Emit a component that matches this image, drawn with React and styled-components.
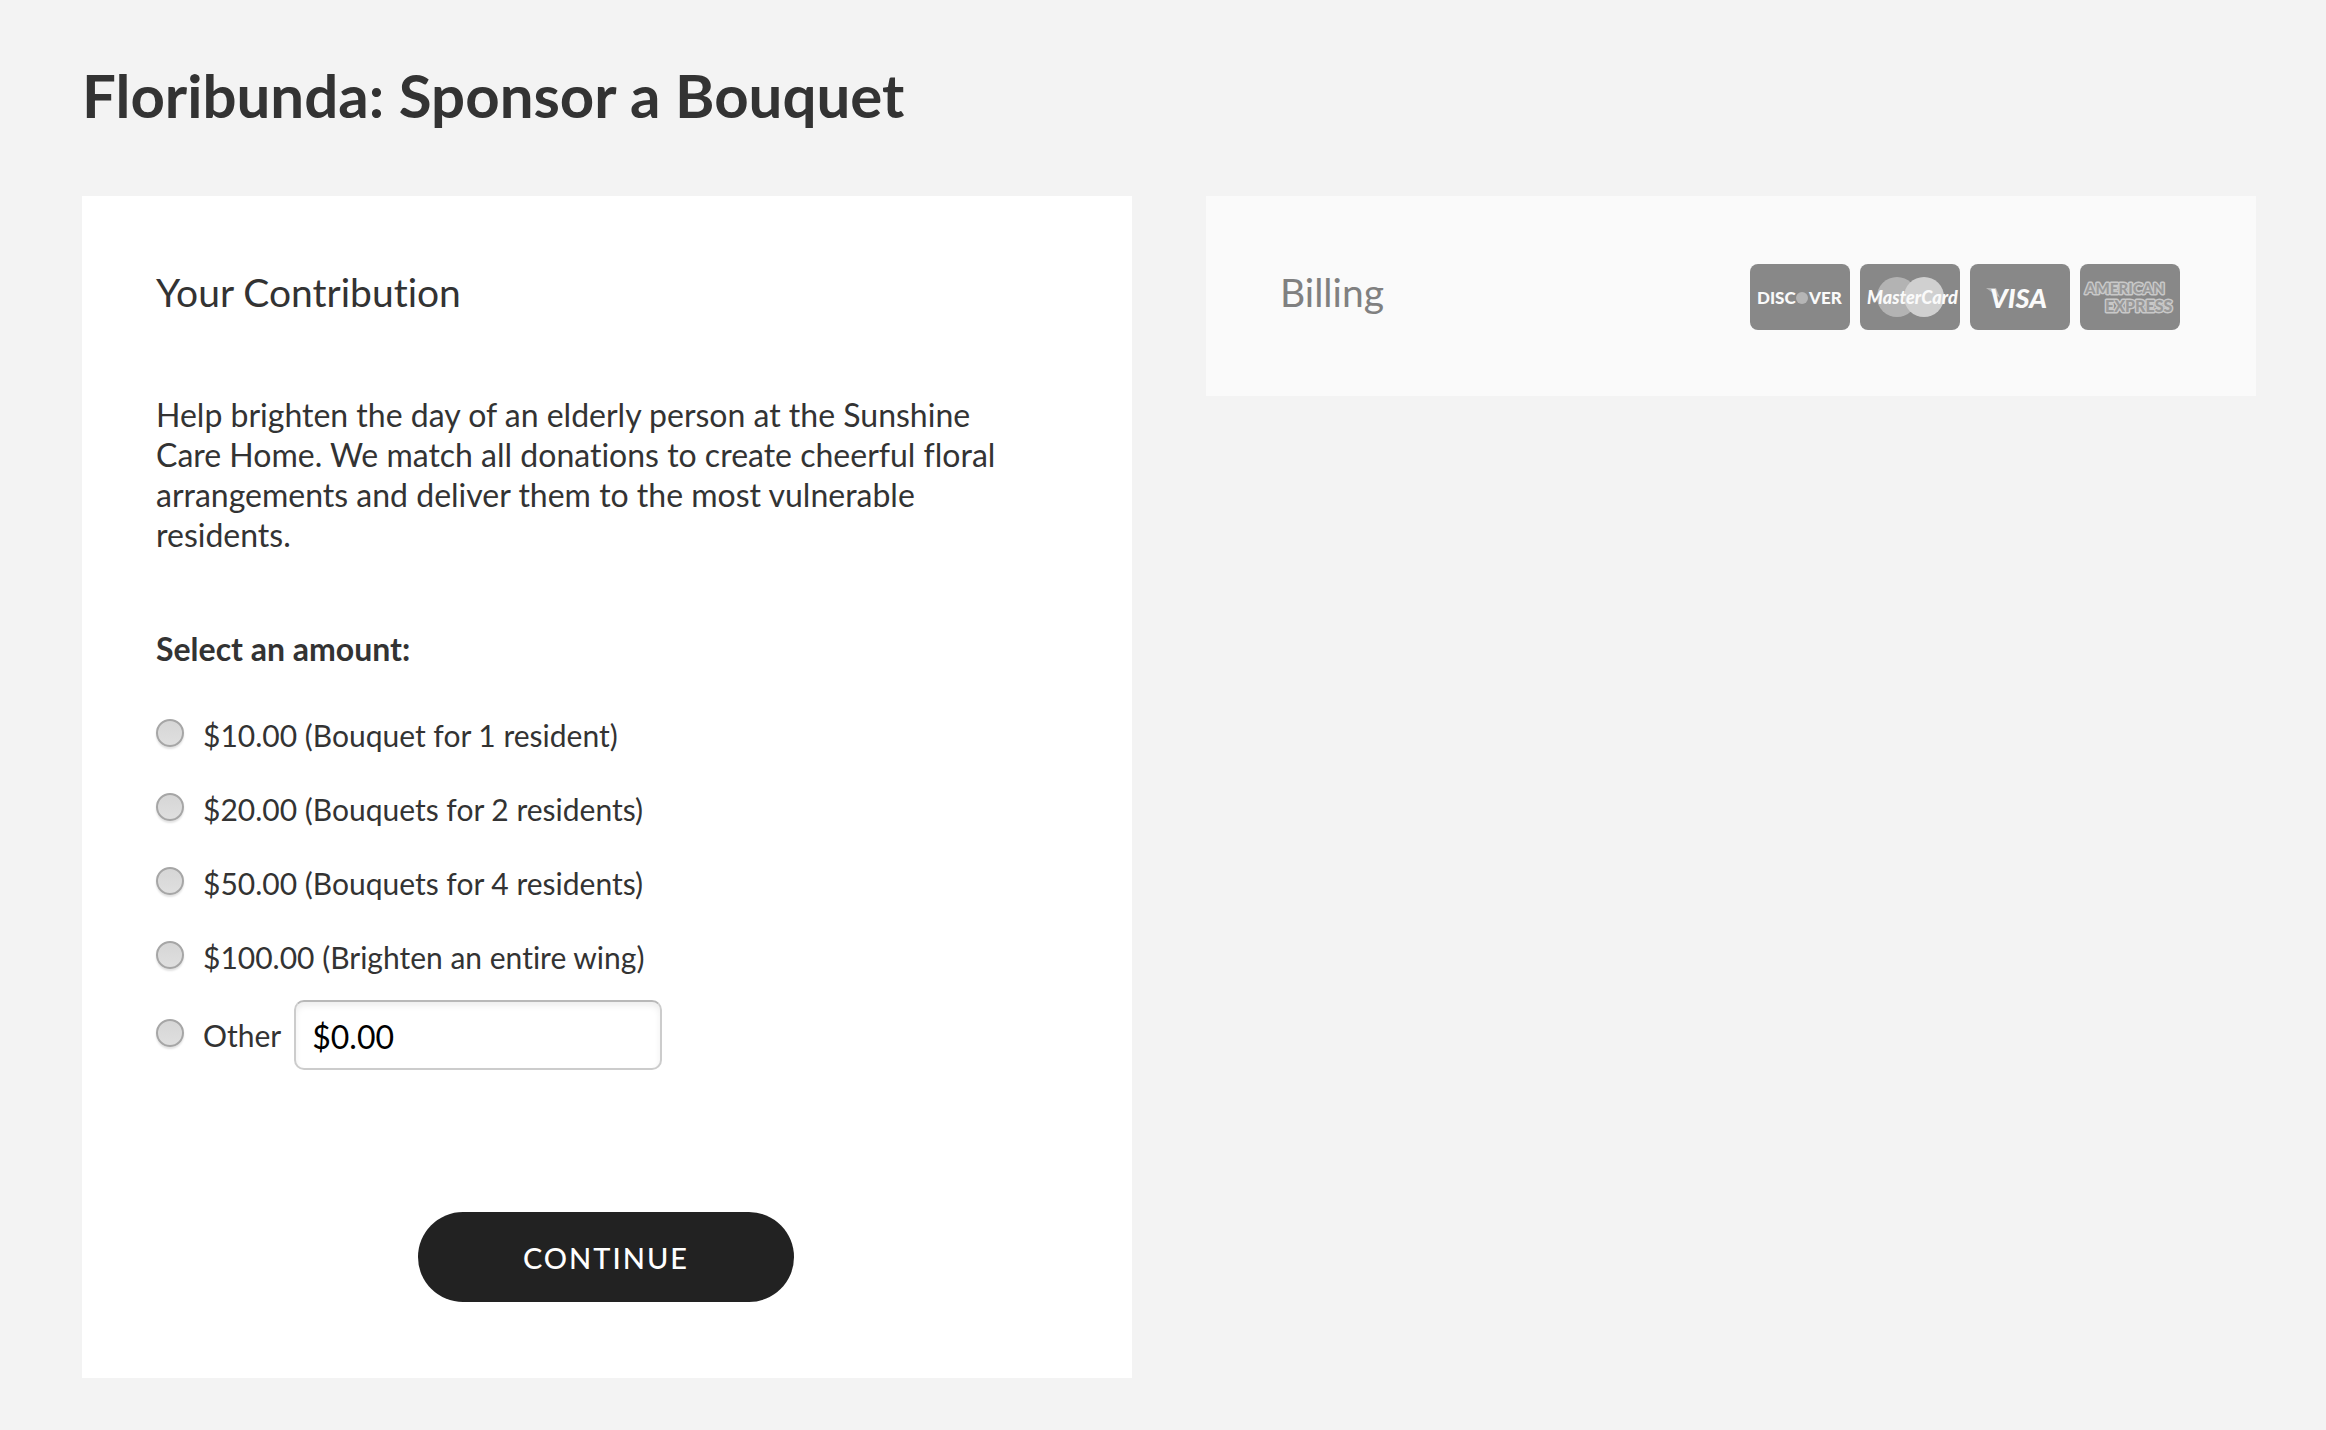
import { useState } from "react";
import styled, { createGlobalStyle } from "styled-components";

const GlobalStyle = createGlobalStyle`
  * {
    box-sizing: border-box;
  }

  body {
    margin: 0;
    background: #f3f3f3;
    color: #333;
    font-family: Lato, "Liberation Sans", sans-serif;
    font-variant-ligatures: none;
  }
`;

const Page = styled.main`
  padding: 58px 70px 52px 82px;
`;

const Title = styled.h1`
  margin: 0 0 64px;
  font-size: 60px;
  line-height: 74px;
  font-weight: 700;
`;

const Columns = styled.div`
  display: grid;
  grid-template-columns: 1fr 1fr;
  align-items: start;
  gap: 74px;
`;

const Panel = styled.section`
  padding: 68px 76px 76px 74px;
  background: #fff;
`;

const BillingPanel = styled(Panel)`
  display: flex;
  justify-content: space-between;
  align-items: flex-start;
  padding-bottom: 66px;
  background: #fafafa;
  color: #808080;
`;

const Heading = styled.h2`
  margin: 0;
  font-size: 39px;
  line-height: 56px;
  font-weight: 400;
`;

const Intro = styled.p`
  margin: 75px 0 74px;
  max-width: 880px;
  font-size: 32px;
  line-height: 40px;
`;

const Amounts = styled.fieldset`
  margin: 0;
  padding: 0;
  border: 0;
`;

const Legend = styled.legend`
  margin-bottom: 29px;
  padding: 0;
  font-size: 32px;
  line-height: 40px;
  font-weight: 700;
`;

const Option = styled.div`
  display: flex;
  align-items: center;
  height: ${({ $tall }) => ($tall ? "82px" : "74px")};
`;

const Label = styled.label`
  margin-left: 19px;
  font-size: 30px;
  line-height: 40px;
`;

const Radio = styled.input`
  appearance: none;
  flex: none;
  width: 28px;
  height: 28px;
  margin: 0 0 4px;
  border: 2px solid #a6a6a6;
  border-radius: 50%;
  background: linear-gradient(#d6d6d6, #dfdfdf);
  box-shadow: 0 2px 2px #e2e2e2;

  &:checked {
    background: radial-gradient(#444 0 6px, #ddd 7px);
  }
`;

const AmountInput = styled.input`
  width: 368px;
  height: 70px;
  margin-left: 13px;
  padding: 2px 16px 0;
  border: 2px solid #ccc;
  border-top-color: #b8b8b8;
  border-radius: 10px;
  box-shadow: inset 0 4px 6px #eee;
  color: #000;
  font-family: inherit;
  font-size: 32px;
`;

const ContinueButton = styled.button`
  display: block;
  width: 376px;
  height: 90px;
  margin: 136px auto 0;
  border: 0;
  border-radius: 45px;
  background: #222;
  color: #fff;
  font-family: inherit;
  font-size: 29px;
  font-weight: 500;
  letter-spacing: 2px;
  text-transform: uppercase;
`;

const Cards = styled.div`
  display: flex;
  gap: 10px;
`;

const Card = styled.svg`
  width: 100px;
  height: 66px;
  border-radius: 8px;
  background: #888;
  fill: #fafafa;
  font-family: Lato, "Liberation Sans", sans-serif;
  font-weight: 900;
`;

const AMOUNTS = [
  { value: "10", label: "$10.00 (Bouquet for 1 resident)" },
  { value: "20", label: "$20.00 (Bouquets for 2 residents)" },
  { value: "50", label: "$50.00 (Bouquets for 4 residents)" },
  { value: "100", label: "$100.00 (Brighten an entire wing)" },
];

function CardLogos() {
  return (
    <Cards>
      <Card viewBox="0 0 100 66" role="img" aria-label="Discover">
        <circle cx="52" cy="34" r="6" fill="#b5b5b5" />
        <text x="7" y="40" fontSize="17">DISC</text>
        <text x="59" y="40" fontSize="17">VER</text>
      </Card>
      <Card viewBox="0 0 100 66" role="img" aria-label="MasterCard">
        <circle cx="37" cy="33" r="20" fill="#b3b3b3" />
        <circle cx="64" cy="33" r="20" fill="#d0d0d0" />
        <text x="7" y="40" fontSize="18" fontStyle="italic">MasterCard</text>
      </Card>
      <Card viewBox="0 0 100 66" role="img" aria-label="Visa">
        <path d="M16 24h10l4 10z" fill="#b5b5b5" />
        <text x="20" y="44" fontSize="27" fontStyle="italic">VISA</text>
      </Card>
      <Card viewBox="0 0 100 66" role="img" aria-label="American Express">
        <g stroke="#c8c8c8" strokeWidth="3" strokeLinejoin="round">
          <text x="5" y="30" fontSize="15">AMERICAN</text>
          <text x="25" y="48" fontSize="16">EXPRESS</text>
        </g>
        <g fill="#999">
          <text x="5" y="30" fontSize="15">AMERICAN</text>
          <text x="25" y="48" fontSize="16">EXPRESS</text>
        </g>
      </Card>
    </Cards>
  );
}

function App() {
  const [amount, setAmount] = useState("");
  const [other, setOther] = useState("$0.00");

  return (
    <>
      <GlobalStyle />
      <Page>
        <Title>Floribunda: Sponsor a Bouquet</Title>
        <Columns>
          <Panel>
            <Heading>Your Contribution</Heading>
            <Intro>
              Help brighten the day of an elderly person at the Sunshine Care
              Home. We match all donations to create cheerful floral
              arrangements and deliver them to the most vulnerable residents.
            </Intro>
            <Amounts>
              <Legend>Select an amount:</Legend>
              {AMOUNTS.map(({ value, label }) => (
                <Option key={value}>
                  <Radio
                    type="radio"
                    name="amount"
                    id={`amount-${value}`}
                    checked={amount === value}
                    onChange={() => setAmount(value)}
                  />
                  <Label htmlFor={`amount-${value}`}>{label}</Label>
                </Option>
              ))}
              <Option $tall>
                <Radio
                  type="radio"
                  name="amount"
                  id="amount-other"
                  checked={amount === "other"}
                  onChange={() => setAmount("other")}
                />
                <Label htmlFor="amount-other">Other</Label>
                <AmountInput
                  type="text"
                  aria-label="Other amount"
                  value={other}
                  onChange={(e) => setOther(e.target.value)}
                />
              </Option>
            </Amounts>
            <ContinueButton type="button">Continue</ContinueButton>
          </Panel>
          <BillingPanel>
            <Heading>Billing</Heading>
            <CardLogos />
          </BillingPanel>
        </Columns>
      </Page>
    </>
  );
}

export default App;
